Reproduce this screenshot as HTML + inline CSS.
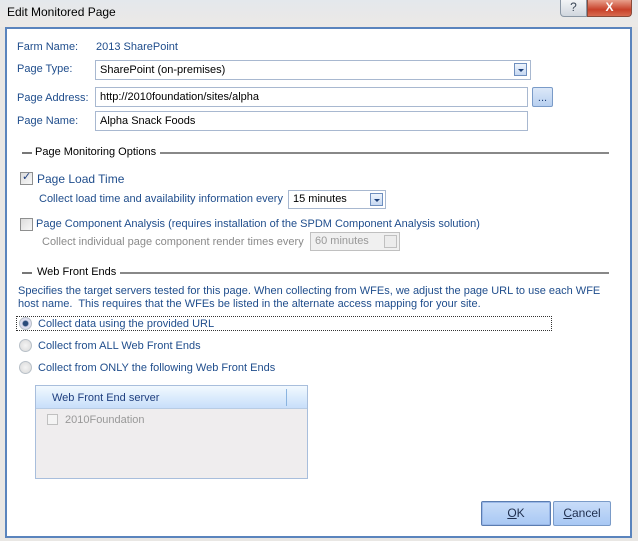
<!DOCTYPE html>
<html><head><style>
*{box-sizing:border-box;margin:0;padding:0}
body{width:638px;height:541px;background:#e9e7e4;position:relative;overflow:hidden;font-family:"Liberation Sans",sans-serif;font-size:11px;color:#1f4d8c}
.a{position:absolute;white-space:nowrap}
.box{position:absolute;border:1px solid #a8b8d0;background:#fff;color:#000;padding:3px 0 0 4px}
.dd{position:absolute;width:13px;height:13px;border:1px solid #6f8fbf;background:linear-gradient(#eef4fc,#c6d8f2)}
.dd:after{content:"";position:absolute;left:3px;top:5px;border:3px solid transparent;border-top:3px solid #1c3f78;border-bottom:0}
.chk{position:absolute;width:13px;height:13px;border:1px solid #8e8f8f;background:linear-gradient(135deg,#dcdcdc,#f8f8f8)}
.rad{position:absolute;width:13px;height:13px;border-radius:50%;border:1px solid #b8c0c8;background:radial-gradient(#f4f4f4,#d8d8d8)}
.line{position:absolute;height:2px;background:#888}
.btn{position:absolute;height:25px;border:1px solid #7a9bc8;border-radius:2px;background:linear-gradient(#c8dcf8,#a8c8f4);color:#1f2f4f;text-align:center;line-height:23px;font-size:12px}
</style></head><body>
<div class="a" style="left:0;top:0;width:638px;height:27px;background:linear-gradient(#e4e8ec,#ece9e6)"></div>
<div class="a" style="left:7px;top:5px;font-size:12px;color:#000">Edit Monitored Page</div>
<div class="a" style="left:560px;top:0;width:27px;height:17px;border:1px solid #8a96a4;border-top:0;border-radius:0 0 0 4px;background:linear-gradient(#f2f4f6,#d0d6de);text-align:center;color:#3a4656;font-size:12px;line-height:15px">?</div>
<div class="a" style="left:587px;top:0;width:45px;height:17px;border:1px solid #8a4a3a;border-top:0;border-radius:0 0 4px 0;background:linear-gradient(#e8a08c,#c8412a 60%,#d86a50);text-align:center;color:#fff;font-weight:bold;font-size:12px;line-height:15px">X</div>
<div class="a" style="left:5px;top:27px;width:627px;height:511px;background:#fff;border:2px solid #5a84bd"></div>

<div class="a" style="left:17px;top:41px">Farm Name:</div>
<div class="a" style="left:96px;top:41px">2013 SharePoint</div>
<div class="a" style="left:17px;top:63px">Page Type:</div>
<div class="box" style="left:95px;top:60px;width:436px;height:20px">SharePoint (on-premises)</div>
<div class="dd" style="left:514px;top:63px"></div>
<div class="a" style="left:17px;top:92px">Page Address:</div>
<div class="box" style="left:95px;top:87px;width:433px;height:20px">http://2010foundation/sites/alpha</div>
<div class="a" style="left:532px;top:87px;width:21px;height:20px;border:1px solid #7a9bc8;border-radius:2px;background:linear-gradient(#dce8f8,#b8d0f0);text-align:center;color:#1c3f78;line-height:20px">...</div>
<div class="a" style="left:17px;top:115px">Page Name:</div>
<div class="box" style="left:95px;top:111px;width:433px;height:20px">Alpha Snack Foods</div>

<div class="line" style="left:22px;top:152px;width:10px;background:#777"></div>
<div class="a" style="left:35px;top:146px;color:#000">Page Monitoring Options</div>
<div class="line" style="left:160px;top:152px;width:449px"></div>
<div class="chk" style="left:20px;top:172px"></div>
<div class="a" style="left:22px;top:170px;color:#1f3f7f;font-size:11px">✓</div>
<div class="a" style="left:37px;top:172px;font-size:12px">Page Load Time</div>
<div class="a" style="left:39px;top:193px">Collect load time and availability information every</div>
<div class="box" style="left:288px;top:190px;width:98px;height:19px;padding-top:2px">15 minutes</div>
<div class="dd" style="left:370px;top:193px"></div>
<div class="chk" style="left:20px;top:218px"></div>
<div class="a" style="left:36px;top:218px">Page Component Analysis (requires installation of the SPDM Component Analysis solution)</div>
<div class="a" style="left:42px;top:236px;color:#8a8a8a">Collect individual page component render times every</div>
<div class="box" style="left:310px;top:232px;width:90px;height:19px;background:#f0f0f0;color:#999;border-color:#c0c0c0;padding-top:2px">60 minutes</div>
<div class="a" style="left:384px;top:235px;width:13px;height:13px;border:1px solid #c0c0c0;background:#ececec"></div>

<div class="line" style="left:22px;top:272px;width:10px;background:#777"></div>
<div class="a" style="left:37px;top:266px;color:#000">Web Front Ends</div>
<div class="line" style="left:120px;top:272px;width:489px"></div>
<div class="a" style="left:18px;top:285px;line-height:13px">Specifies the target servers tested for this page. When collecting from WFEs, we adjust the page URL to use each WFE<br>host name.&nbsp; This requires that the WFEs be listed in the alternate access mapping for your site.</div>
<div class="a" style="left:16px;top:316px;width:536px;height:15px;border:1px dotted #333"></div>
<div class="rad" style="left:19px;top:317px;background:radial-gradient(#2a4a7a 30%,#dde 45%)"></div>
<div class="a" style="left:38px;top:318px">Collect data using the provided URL</div>
<div class="rad" style="left:19px;top:339px"></div>
<div class="a" style="left:38px;top:340px">Collect from ALL Web Front Ends</div>
<div class="rad" style="left:19px;top:361px"></div>
<div class="a" style="left:38px;top:362px">Collect from ONLY the following Web Front Ends</div>

<div class="a" style="left:35px;top:385px;width:273px;height:94px;border:1px solid #a8bedc;background:#efedee"></div>
<div class="a" style="left:36px;top:386px;width:271px;height:23px;background:linear-gradient(#f2f9fe,#dcecfc 50%,#c8defa);border-bottom:1px solid #b8cce4"></div>
<div class="a" style="left:52px;top:392px;color:#1f3f7f">Web Front End server</div>
<div class="a" style="left:286px;top:389px;width:1px;height:17px;background:#8ab4e0"></div>
<div class="a" style="left:47px;top:414px;width:11px;height:11px;border:1px solid #c0c0c0;background:#f4f4f4"></div>
<div class="a" style="left:65px;top:414px;color:#999">2010Foundation</div>

<div class="btn" style="left:481px;top:501px;width:70px;border-color:#5a7cb0;box-shadow:inset 0 0 0 1px #9ab8e8"><u>O</u>K</div>
<div class="btn" style="left:553px;top:501px;width:58px"><u>C</u>ancel</div>
</body></html>
